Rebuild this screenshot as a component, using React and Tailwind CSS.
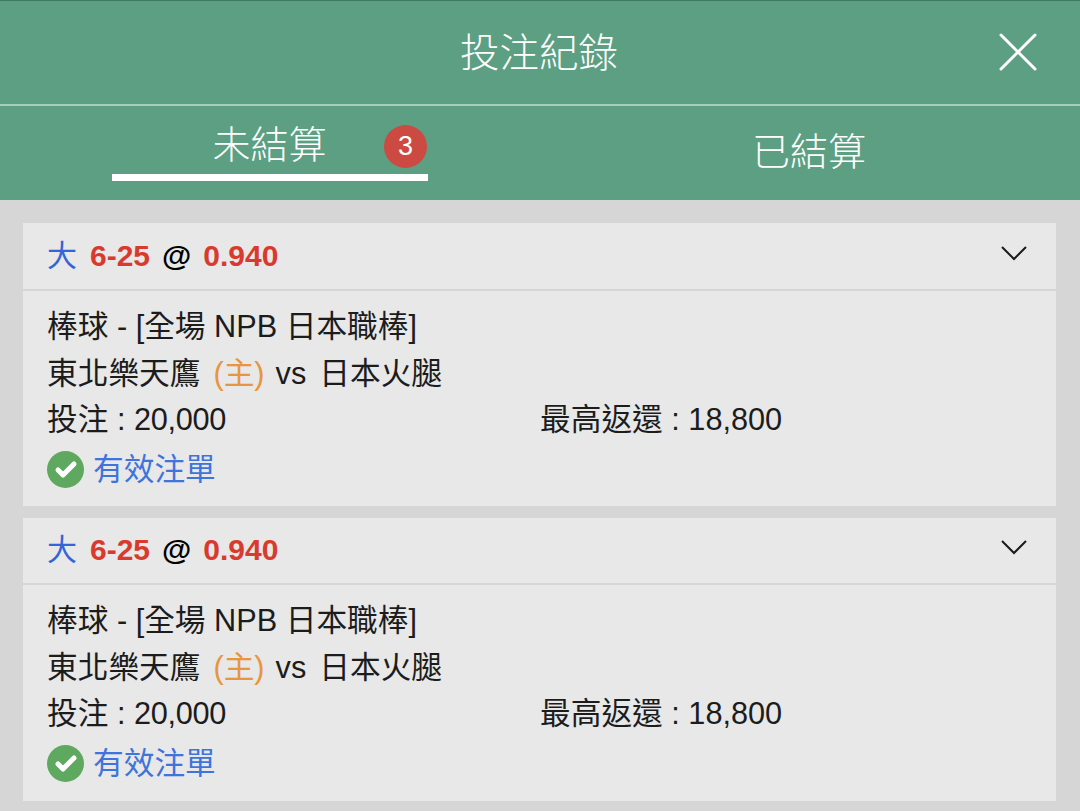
import { Check } from 'lucide-react'

const FONT = "font-['Liberation_Sans','Noto_Sans_CJK_TC',sans-serif]"

function BetCard({ second }) {
  return (
    <div className="bg-[#e8e8e8]">
      <div className={`${second ? 'h-[65px] pb-[1px]' : 'h-[66px]'} flex items-center justify-between pl-[24px] pr-[28px]`}>
        <p className="flex items-center gap-[12px] text-[30px] leading-none whitespace-pre">
          <span className="mr-[1px] text-[#3564d8]">大</span>
          <span className="font-bold text-[#d93a2e]">6-25</span>
          <span className="font-bold text-black">@</span>
          <span className="font-bold text-[#d93a2e]">0.940</span>
        </p>
        <svg width="28" height="16" viewBox="0 0 28 16" fill="none" stroke="#1a1a1a" strokeWidth="2" className="mb-[6px]">
          <path d="M2 2 L14 14 L26 2" />
        </svg>
      </div>
      <div className="h-[2px] bg-[#d6d6d6]" />
      <div className={`pl-[24px] pt-[12px] ${second ? 'h-[216px]' : 'h-[215px]'} text-[30.7px] leading-[47px] text-[#1c1c1c]`}>
        <p className="whitespace-pre">棒球 - [全場 NPB 日本職棒]</p>
        <p className="whitespace-pre">
          東北樂天鷹<span className="ml-[13px] text-[#e8953f]">(主)</span>
          <span className="ml-[11px]">vs</span>
          <span className="ml-[13px]">日本火腿</span>
        </p>
        <div className="flex leading-[46px]">
          <p className="w-[493px] whitespace-pre">投注 : <span className="tracking-[-0.3px]">20,000</span></p>
          <p className="whitespace-pre">最高返還 : 18,800</p>
        </div>
        <div className="flex items-center gap-[9px] mt-[3px]">
          <span className="w-[37px] h-[37px] rounded-full bg-[#5fa85f] flex items-center justify-center">
            <Check size={24} strokeWidth={5} className="text-white" />
          </span>
          <span className="text-[#3f74dc]">有效注單</span>
        </div>
      </div>
    </div>
  )
}

export default function App() {
  return (
    <div className={`${FONT} w-[1080px] h-[811px] overflow-hidden bg-[#d6d6d6]`}>
      {/* Header */}
      <header className="bg-[#5c9f82] border-t border-[#3f7a62] text-white">
        <div className="h-[103px] flex items-center justify-center relative">
          <h1 className="text-[39.5px] font-light leading-none pr-[2px] pt-[2px]">投注紀錄</h1>
          <svg width="38" height="38" viewBox="0 0 38 38" stroke="#fff" strokeWidth="3" strokeLinecap="round" className="absolute right-[43px] top-[32px]">
            <path d="M2 2 L36 36 M36 2 L2 36" />
          </svg>
        </div>
        <div className="h-[2px] bg-[#a8cdbb]" />
        {/* Tabs */}
        <div className="h-[94px] relative flex">
          <div className="ml-[112px] w-[316px] h-[75px] border-b-[7px] border-white flex items-start justify-center pr-[1px] pt-[20px]">
            <span className="text-[38px] font-light leading-none">未結算</span>
            <span className="absolute left-[384px] top-[19px] w-[43px] h-[43px] rounded-full bg-[#cc4a42] text-[27px] leading-none flex items-center justify-center">3</span>
          </div>
          <div className="ml-[324px] pt-[27px]">
            <span className="text-[38px] font-light leading-none">已結算</span>
          </div>
        </div>
      </header>

      {/* Bets */}
      <main className="pt-[23px] pl-[23px] pr-[24px] flex flex-col gap-[12px]">
        <BetCard />
        <BetCard second />
      </main>
    </div>
  )
}
